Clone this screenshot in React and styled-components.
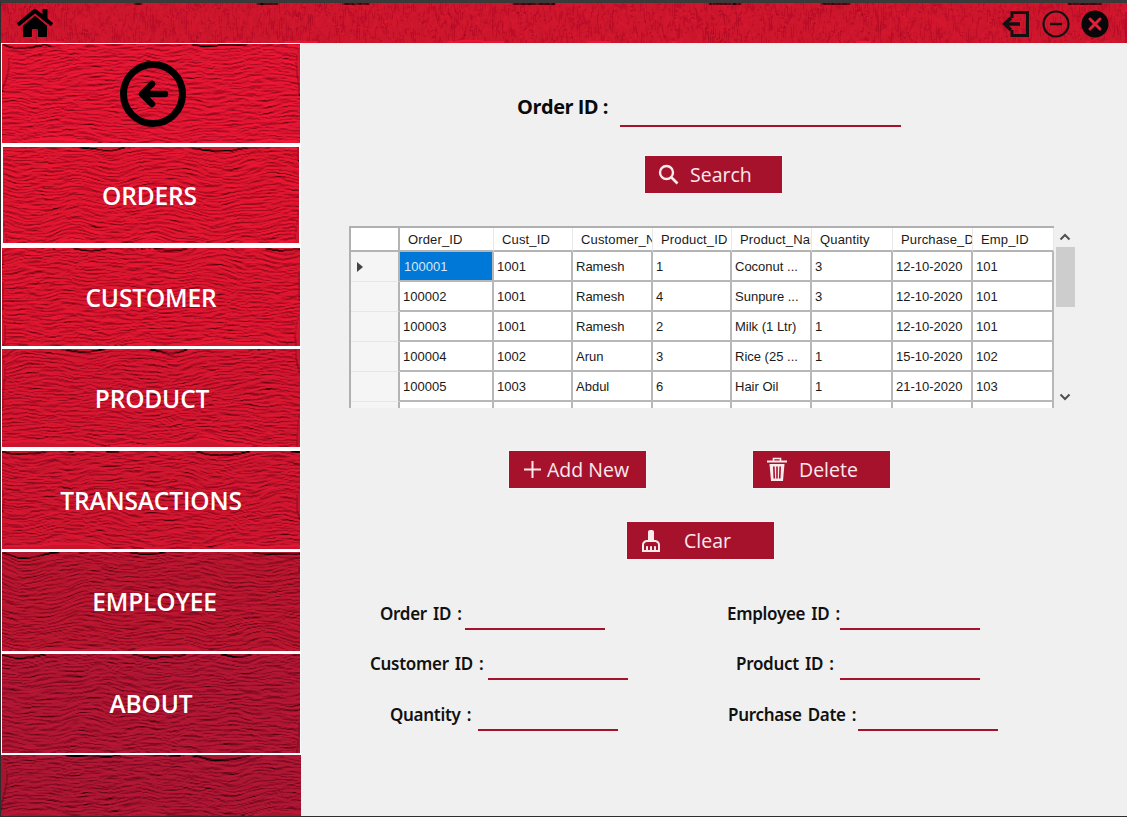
import React from 'react'
import styled, { createGlobalStyle } from 'styled-components'
import { FaHome } from 'react-icons/fa'
import { MdCleaningServices } from 'react-icons/md'

const GlobalStyle = createGlobalStyle`
  html, body { margin: 0; padding: 0; }
  body { background: #333; font-family: "Open Sans", "Liberation Sans", sans-serif; }
  * { box-sizing: border-box; }
`

const Window = styled.div`
  width: 1127px;
  height: 817px;
  background: #f0f0f0;
  border-top: 3px solid #3a3a3a;
  border-left: 1px solid #2e2e2e;
  border-bottom: 1px solid #2e2e2e;
  display: flex;
  flex-direction: column;
  overflow: hidden;
`

const TopBar = styled.header`
  position: relative;
  flex: 0 0 40px;
  display: flex;
  align-items: center;
  justify-content: space-between;
  padding: 1px 18px 0 16px;
  overflow: hidden;
`

const TopIcons = styled.div`
  position: relative;
  display: flex;
  align-items: center;
  gap: 11px;
`

const HomeIcon = styled(FaHome)`
  position: relative;
  width: 36px;
  height: 32px;
  color: #000;
  margin-top: -1px;
`

const Body = styled.div`
  flex: 1;
  display: flex;
  min-height: 0;
`

const Sidebar = styled.nav`
  flex: 0 0 300px;
  background: #fff;
  padding-top: 1px;
  display: flex;
  flex-direction: column;
`

const NavItem = styled.div`
  position: relative;
  height: ${p => p.$h}px;
  flex: ${p => (p.$fill ? '1' : 'none')};
  margin: ${p => p.$top}px ${p => p.$inset}px 0;
  overflow: hidden;
  display: flex;
  align-items: center;
  justify-content: center;
`

const NavLabel = styled.span`
  position: relative;
  margin-left: ${p => p.$shift}px;
  color: #fff;
  font-size: 24.5px;
  font-weight: 600;
  letter-spacing: -0.15px;
`

const BackSvg = styled.svg`
  position: relative;
  margin-left: 4px;
`

const TextureSvg = styled.svg`
  position: absolute;
  inset: 0;
  width: 100%;
  height: 100%;
`

const Main = styled.main`
  flex: 1;
  min-width: 0;
  display: flex;
  flex-direction: column;
  padding-top: 47px;
`

const SearchRow = styled.div`
  display: flex;
  align-items: flex-start;
  margin-left: 216px;
  height: 37px;
`

const SearchLabel = styled.label`
  width: 103px;
  font-size: 20px;
  font-weight: 700;
  line-height: 34px;
  color: #0a0a0a;
  letter-spacing: -0.5px;
  white-space: nowrap;
`

const SearchInput = styled.input`
  width: 281px;
  height: 37px;
  background: transparent;
  border: 0;
  border-bottom: 2px solid #a6122c;
  outline: none;
`

const ActionRow = styled.div`
  display: flex;
  margin-top: ${p => p.$top}px;
  margin-left: ${p => p.$left}px;
  gap: ${p => p.$gap || 0}px;
`

const ActionButton = styled.button`
  width: ${p => p.$w}px;
  height: 39px;
  padding: 0 0 0 ${p => p.$pad}px;
  display: flex;
  align-items: center;
  gap: ${p => p.$gap}px;
  background: #a6122c;
  border: 1px solid #f8f4f5;
  color: #fbe9ec;
  font-family: "Open Sans", "Liberation Sans", sans-serif;
  font-size: 19.5px;
  line-height: 1;
  svg { flex: none; }
`

const GridWrap = styled.div`
  margin: 32px 0 0 48px;
  display: flex;
  height: 182px;
`

const GridClip = styled.div`
  width: 705px;
  height: 182px;
  overflow: hidden;
  border-top: 2px solid #b0b0b0;
  border-left: 2px solid #b0b0b0;
`

const Grid = styled.table`
  width: 703px;
  table-layout: fixed;
  border-collapse: separate;
  border-spacing: 0;
  font-family: "Liberation Sans", Arial, sans-serif;
  color: #1a1a1a;
`

const HeadCell = styled.th`
  height: 24px;
  padding: 0 0 0 8px;
  background: #fff;
  font-size: 13px;
  font-weight: 400;
  letter-spacing: 0.15px;
  text-align: left;
  white-space: nowrap;
  overflow: hidden;
  border-right: 1px solid #e8e8e8;
  border-bottom: 2px solid #b4b4b4;
  &:first-child { border-right: 2px solid #b4b4b4; }
`

const Cell = styled.td`
  height: 30px;
  padding: 0 0 0 ${p => (p.$selected ? 4 : 3)}px;
  background: ${p => (p.$selected ? '#0078d7' : '#fff')};
  color: ${p => (p.$selected ? '#d4e8f9' : '#1a1a1a')};
  font-size: 13px;
  white-space: nowrap;
  overflow: hidden;
  border-right: 2px solid #b8b8b8;
  border-bottom: 2px solid #b8b8b8;
`

const RowHead = styled.td`
  height: 30px;
  padding: 0 0 0 6px;
  background: #f5f5f5;
  border-right: 2px solid #b4b4b4;
  border-bottom: 1px solid #e6e6e6;
`

const RowArrow = styled.span`
  display: block;
  width: 0;
  height: 0;
  border-left: 6px solid #444;
  border-top: 5px solid transparent;
  border-bottom: 5px solid transparent;
`

const ScrollBar = styled.div`
  width: 20px;
  height: 182px;
  margin-left: 1px;
  display: flex;
  flex-direction: column;
  align-items: center;
  padding-top: 21px;
  position: relative;
`

const ScrollThumb = styled.div`
  width: 19px;
  height: 60px;
  background: #cdcdcd;
`

const ScrollArrow = styled.svg`
  position: absolute;
  left: 4px;
  width: 12px;
  height: 8px;
  top: ${p => p.$top}px;
`

const FormGrid = styled.div`
  margin: 41.5px 0 0 69px;
  display: grid;
  grid-template-columns: 357px 280px;
  grid-auto-rows: 50.5px;
`

const Field = styled.div`
  display: flex;
  align-items: flex-start;
  padding-left: ${p => p.$indent}px;
`

const FieldLabel = styled.label`
  flex: 0 0 ${p => p.$w}px;
  font-family: "Noto Sans", "Open Sans", sans-serif;
  font-size: 17px;
  font-weight: 600;
  line-height: 24px;
  color: #111;
  letter-spacing: -0.3px;
  word-spacing: 2px;
  white-space: nowrap;
`

const FieldInput = styled.input`
  width: 140px;
  height: 28px;
  background: transparent;
  border: 0;
  border-bottom: 2px solid #a6122c;
  outline: none;
`

// embossed wood grain, each panel has its own seed
function Texture({ seed, color, freq = '0.05 0.75', warp = 22 }) {
  const id = `wood-${seed}`
  return (
    <TextureSvg aria-hidden="true">
      <filter id={id} x="0" y="0" width="100%" height="100%">
        <feTurbulence type="fractalNoise" baseFrequency={freq} numOctaves="4" seed={seed} result="grain" />
        <feTurbulence type="fractalNoise" baseFrequency="0.016" numOctaves="2" seed={seed + 50} result="warp" />
        <feDisplacementMap in="grain" in2="warp" scale={warp} xChannelSelector="R" yChannelSelector="G" result="bent" />
        <feDiffuseLighting in="bent" surfaceScale="1.7" diffuseConstant="1.1" lightingColor={color}>
          <feDistantLight azimuth="90" elevation="48" />
        </feDiffuseLighting>
      </filter>
      <rect width="100%" height="100%" filter={`url(#${id})`} />
    </TextureSvg>
  )
}

const BackIcon = () => (
  <BackSvg width="68" height="68" viewBox="0 0 68 68">
    <circle cx="34" cy="34" r="29.5" fill="none" stroke="#000" strokeWidth="7" />
    <path d="M46 34H24M33 24 23 34 33 44" fill="none" stroke="#000" strokeWidth="6.5" strokeLinecap="round" strokeLinejoin="round" />
  </BackSvg>
)

const ExitIcon = () => (
  <svg width="30" height="28" viewBox="0 0 30 28">
    <path d="M11 8V2.500H26.500V25.500H11V20" fill="none" stroke="#111" strokeWidth="3" />
    <path d="M19 14H5M10 8 3.500 14 10 20" fill="none" stroke="#111" strokeWidth="3.400" />
  </svg>
)

const MinusIcon = () => (
  <svg width="28" height="28" viewBox="0 0 28 28">
    <circle cx="14" cy="14" r="12.500" fill="none" stroke="#111" strokeWidth="2.200" />
    <path d="M8 14H20" stroke="#111" strokeWidth="2.400" />
  </svg>
)

const CloseIcon = () => (
  <svg width="28" height="28" viewBox="0 0 28 28">
    <circle cx="14" cy="14" r="13.500" fill="#080808" />
    <path d="M9 9 19 19M19 9 9 19" stroke="#e0203c" strokeWidth="3" strokeLinecap="round" />
  </svg>
)

const SearchIcon = () => (
  <svg width="21" height="21" viewBox="0 0 21 21">
    <circle cx="8.500" cy="8.500" r="6.500" fill="none" stroke="#fbe9ec" strokeWidth="2.400" />
    <path d="M13.500 13.500 19.500 19.500" stroke="#fbe9ec" strokeWidth="2.600" />
  </svg>
)

const PlusIcon = () => (
  <svg width="17" height="17" viewBox="0 0 17 17">
    <path d="M8.500 0V17M0 8.500H17" stroke="#fbe9ec" strokeWidth="2" />
  </svg>
)

const TrashIcon = () => (
  <svg width="20" height="25" viewBox="0 0 20 25">
    <path d="M0 4.500H20" stroke="#fbe9ec" strokeWidth="2" />
    <path d="M6.500 4V1.500H13.500V4" fill="none" stroke="#fbe9ec" strokeWidth="1.600" />
    <path d="M2.500 7H17.500L16 24H4Z" fill="#fbe9ec" />
    <path d="M6.800 9.500 7.300 21.500M10 9.500V21.500M13.200 9.500 12.700 21.500" stroke="#a6122c" strokeWidth="1.600" />
  </svg>
)

const navItems = [
  { label: 'ORDERS', h: 96, top: 4, inset: 2, seed: 3, color: '#e81632', shift: -3 },
  { label: 'CUSTOMER', h: 98, top: 5, inset: 1, seed: 8, color: '#e41632', shift: 0 },
  { label: 'PRODUCT', h: 98, top: 3, inset: 1, seed: 12, color: '#dc1432', shift: 2 },
  { label: 'TRANSACTIONS', h: 98, top: 4, inset: 1, seed: 17, color: '#d81432', shift: 0 },
  { label: 'EMPLOYEE', h: 99, top: 3, inset: 1, seed: 21, color: '#c01430', shift: 7 },
  { label: 'ABOUT', h: 99, top: 3, inset: 1, seed: 26, color: '#b81636', shift: 0 },
]

const columns = [
  { title: '', width: 49 },
  { title: 'Order_ID', width: 94 },
  { title: 'Cust_ID', width: 79 },
  { title: 'Customer_Name', width: 80 },
  { title: 'Product_ID', width: 79 },
  { title: 'Product_Name', width: 80 },
  { title: 'Quantity', width: 81 },
  { title: 'Purchase_Date', width: 80 },
  { title: 'Emp_ID', width: 81 },
]

const rows = [
  ['100001', '1001', 'Ramesh', '1', 'Coconut ...', '3', '12-10-2020', '101'],
  ['100002', '1001', 'Ramesh', '4', 'Sunpure ...', '3', '12-10-2020', '101'],
  ['100003', '1001', 'Ramesh', '2', 'Milk (1 Ltr)', '1', '12-10-2020', '101'],
  ['100004', '1002', 'Arun', '3', 'Rice (25 ...', '1', '15-10-2020', '102'],
  ['100005', '1003', 'Abdul', '6', 'Hair Oil', '1', '21-10-2020', '103'],
  ['', '', '', '', '', '', '', ''],
]

const fields = [
  { label: 'Order ID :', indent: 10, w: 85 },
  { label: 'Employee ID :', indent: 0, w: 113 },
  { label: 'Customer ID :', indent: 0, w: 118 },
  { label: 'Product ID :', indent: 9, w: 104 },
  { label: 'Quantity :', indent: 20, w: 88 },
  { label: 'Purchase Date :', indent: 1, w: 130 },
]

export default function App() {
  return (
    <Window>
      <GlobalStyle />
      <TopBar>
        <Texture seed={41} color="#e01632" freq="0.6 0.05" warp={6} />
        <HomeIcon />
        <TopIcons>
          <ExitIcon />
          <MinusIcon />
          <CloseIcon />
        </TopIcons>
      </TopBar>
      <Body>
        <Sidebar>
          <NavItem $h={99} $top={0} $inset={1}>
            <Texture seed={1} color="#ec1834" />
            <BackIcon />
          </NavItem>
          {navItems.map(item => (
            <NavItem key={item.label} $h={item.h} $top={item.top} $inset={item.inset}>
              <Texture seed={item.seed} color={item.color} />
              <NavLabel $shift={item.shift}>{item.label}</NavLabel>
            </NavItem>
          ))}
          <NavItem $fill $top={2} $inset={0}>
            <Texture seed={33} color="#b41636" />
          </NavItem>
        </Sidebar>
        <Main>
          <SearchRow>
            <SearchLabel>Order ID :</SearchLabel>
            <SearchInput />
          </SearchRow>
          <ActionRow $top={28} $left={343}>
            <ActionButton $w={139} $pad={13} $gap={11}>
              <SearchIcon />
              Search
            </ActionButton>
          </ActionRow>
          <GridWrap>
            <GridClip>
              <Grid>
                <colgroup>
                  {columns.map((col, i) => <col key={i} width={col.width} />)}
                </colgroup>
                <thead>
                  <tr>
                    {columns.map((col, i) => <HeadCell key={i}>{col.title}</HeadCell>)}
                  </tr>
                </thead>
                <tbody>
                  {rows.map((row, r) => (
                    <tr key={r}>
                      <RowHead>{r === 0 && <RowArrow />}</RowHead>
                      {row.map((val, c) => (
                        <Cell key={c} $selected={r === 0 && c === 0}>{val}</Cell>
                      ))}
                    </tr>
                  ))}
                </tbody>
              </Grid>
            </GridClip>
            <ScrollBar>
              <ScrollArrow $top={7} viewBox="0 0 12 8">
                <path d="M1.500 6.500 6 2 10.500 6.500" fill="none" stroke="#505050" strokeWidth="2" />
              </ScrollArrow>
              <ScrollThumb />
              <ScrollArrow $top={167} viewBox="0 0 12 8">
                <path d="M1.500 1.500 6 6 10.500 1.500" fill="none" stroke="#505050" strokeWidth="2" />
              </ScrollArrow>
            </ScrollBar>
          </GridWrap>
          <ActionRow $top={42} $left={207} $gap={105}>
            <ActionButton $w={139} $pad={15} $gap={6}>
              <PlusIcon />
              Add New
            </ActionButton>
            <ActionButton $w={139} $pad={14} $gap={12}>
              <TrashIcon />
              Delete
            </ActionButton>
          </ActionRow>
          <ActionRow $top={32} $left={325}>
            <ActionButton $w={149} $pad={12} $gap={21}>
              <MdCleaningServices size={24} />
              Clear
            </ActionButton>
          </ActionRow>
          <FormGrid>
            {fields.map(f => (
              <Field key={f.label} $indent={f.indent}>
                <FieldLabel $w={f.w}>{f.label}</FieldLabel>
                <FieldInput />
              </Field>
            ))}
          </FormGrid>
        </Main>
      </Body>
    </Window>
  )
}
